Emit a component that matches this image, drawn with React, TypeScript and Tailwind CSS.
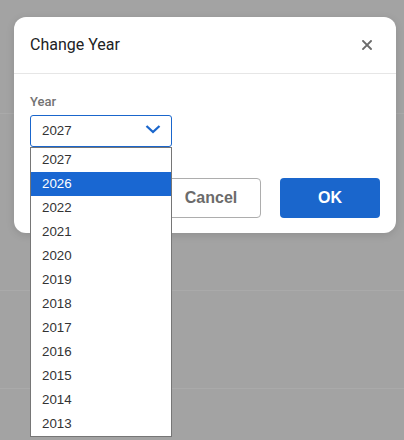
import React from "react";

const years = ["2027", "2026", "2022", "2021", "2020", "2019", "2018", "2017", "2016", "2015", "2014", "2013"];

export default function App() {
  return (
    <div className="relative w-[404px] h-[440px] overflow-hidden bg-[#a3a3a3] font-['Liberation_Sans',Arial,sans-serif]">
      {/* underlying page, dimmed */}
      <div className="flex flex-col">
        <div className="h-[114px] border-b border-[#aaaaaa]" />
        <div className="h-[177px] border-b border-[#aaaaaa]" />
        <div className="h-[98px] border-b border-[#aaaaaa]" />
      </div>

      {/* dialog */}
      <div className="absolute left-[14px] top-[17px] w-[382px] rounded-[12px] bg-white shadow-[0_2px_8px_rgba(0,0,0,0.12)]">
        <div className="h-[57px] flex items-center justify-between pl-4 pr-[24px] border-b border-[#e6e6e6]">
          <span className="font-['Roboto',sans-serif] text-[16px] text-[#202124] leading-none">Change Year</span>
          <svg width="10" height="10" viewBox="0 0 10 10" className="block">
            <path d="M1 1 L9 9 M9 1 L1 9" stroke="#6b6b6b" strokeWidth="1.9" strokeLinecap="square" fill="none" />
          </svg>
        </div>

        <div className="px-4 pt-[20px] pb-[15px]">
          <div className="font-['Roboto',sans-serif] font-medium text-[13px] leading-4 text-[#737373] mb-[5px]">Year</div>
          <div className="relative w-[142px]">
            <div className="h-[32px] flex items-center justify-between pl-[11px] pr-[10px] border border-[#1a66cc] rounded-[3px] text-[13.33px] text-[#333333]">
              <span>2027</span>
              <svg width="16" height="10" viewBox="0 0 16 10" className="block mb-[4px]">
                <path d="M1.5 2 L8 8 L14.5 2" stroke="#1a66cc" strokeWidth="2.3" fill="none" />
              </svg>
            </div>
            <div className="absolute left-0 top-full z-10 w-[142px] bg-white border border-[#767676] flex flex-col">
              {years.map((y, i) => (
                <div
                  key={y}
                  className={
                    i === 1
                      ? "h-[24px] flex items-center pl-[11px] text-[13.33px] bg-[#1967d2] text-white"
                      : "h-[24px] flex items-center pl-[11px] text-[13.33px] text-[#333333]"
                  }
                >
                  {y}
                </div>
              ))}
            </div>
          </div>

          <div className="mt-[31px] flex justify-end gap-[19px]">
            <button className="w-[100px] h-[40px] rounded-[4px] border border-[#adadad] bg-white text-[16px] font-bold text-[#6b6b6b]">
              Cancel
            </button>
            <button className="w-[100px] h-[40px] rounded-[4px] bg-[#1a66cc] text-[16px] font-bold text-white">
              OK
            </button>
          </div>
        </div>
      </div>
    </div>
  );
}
